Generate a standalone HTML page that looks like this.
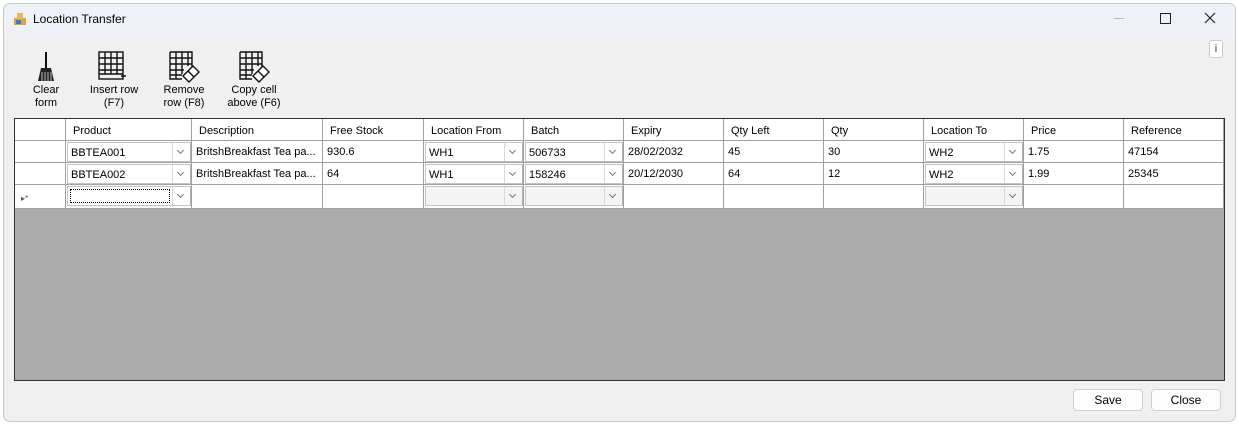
<!DOCTYPE html>
<html><head><style>
body{margin:0;width:1239px;height:424px;background:#fff;font-family:"Liberation Sans",sans-serif;font-size:11px;color:#000;position:relative;overflow:hidden}
.win{position:absolute;left:3px;top:3px;width:1231px;height:417px;border:1px solid #c8c8c8;border-radius:7px;background:#f0f0f0;overflow:hidden}
.tb{position:absolute;left:0;top:0;right:0;height:30px;background:#eef2f8}
.a{position:absolute}
.lbl{position:absolute;text-align:center;font-size:11px;line-height:13px}
.grid{position:absolute;left:14px;top:118px;width:1209px;height:261px;border:1px solid #333;background:#ababab}
.c{position:absolute;box-sizing:border-box;border-right:1px solid #a0a0a0;border-bottom:1px solid #a0a0a0;background:#fff;padding:5px 0 0 4px;white-space:nowrap;overflow:hidden;height:22px}
.cb{position:absolute;box-sizing:border-box;border:1px solid #c4c4c4;border-right-color:#b0b0b0;background:#fff;height:20px}
.ar{position:absolute;right:0;top:0;width:17px;height:18px;border-left:1px solid #d8d8d8;background:#fff}
.ar:after{content:"";position:absolute;left:5px;top:5px;width:4px;height:4px;border-right:1px solid #777;border-bottom:1px solid #777;transform:rotate(45deg)}
.btn{position:absolute;box-sizing:border-box;border:1px solid #cfcfcf;border-radius:4px;background:#fdfdfd;text-align:center;font-size:12px;line-height:20px}
</style></head><body>
<div class="win">
<div class="tb"></div>
<svg class="a" style="left:9px;top:8px" width="14" height="14"><rect x="1" y="6" width="12" height="7" fill="#d9a441"/><rect x="4" y="1" width="6" height="6" fill="#e8b860"/><rect x="3" y="8" width="5" height="4" fill="#3a78c8"/></svg>
<div class="a" style="left:29px;top:8px;font-size:12px">Location Transfer</div>
<div class="a" style="left:1110px;top:14px;width:10px;height:1px;background:#bbb"></div>
<div class="a" style="left:1156px;top:9px;width:9px;height:9px;border:1px solid #222"></div>
<svg class="a" style="left:1200px;top:8px" width="12" height="12"><path d="M1 1L11 11M11 1L1 11" stroke="#222" stroke-width="1.2"/></svg>
<div class="a" style="left:1205px;top:36px;width:12px;height:16px;border:1px solid #ccc;border-radius:3px;background:#fff;color:#1a3a9a;text-align:center;line-height:16px;font-size:11px">i</div>

<svg class="a" style="left:30px;top:46px" width="24" height="34"><rect x="11" y="2" width="2" height="16" fill="#111"/><path d="M7 18h10l3 13H4z" fill="#222"/><path d="M8 22v9M11 22v9M14 22v9M17 22v9" stroke="#fff" stroke-width=".7"/></svg>
<div class="lbl" style="left:19px;top:80px;width:46px">Clear<br>form</div>
<svg class="a" style="left:93px;top:46px" width="30" height="34"><g stroke="#111" stroke-width="1.4" fill="none"><rect x="2" y="2" width="24" height="27"/><path d="M8 2v22M14 2v22M20 2v22M2 8h24M2 14h24M2 20h24M2 24h24"/></g><path d="M24 26h5" stroke="#111" stroke-width="1.5"/></svg>
<div class="lbl" style="left:80px;top:80px;width:60px">Insert row<br>(F7)</div>
<svg class="a" style="left:164px;top:46px" width="34" height="34"><g stroke="#111" stroke-width="1.4" fill="none"><path d="M2 2h22v16M2 2v27h12M8 2v27M14 2v22M20 2v14M2 8h22M2 14h22M2 20h14M2 25h12"/><path d="M15 26l10-10 6 6-10 10z" fill="#fff"/><path d="M20 21l6 6"/></g></svg>
<div class="lbl" style="left:150px;top:80px;width:60px">Remove<br>row (F8)</div>
<svg class="a" style="left:234px;top:46px" width="34" height="34"><g stroke="#111" stroke-width="1.4" fill="none"><path d="M2 2h22v16M2 2v27h12M8 2v27M14 2v22M20 2v14M2 8h22M2 14h22M2 20h14M2 25h12"/><path d="M15 26l10-10 6 6-10 10z" fill="#fff"/><path d="M20 21l6 6"/></g></svg>
<div class="lbl" style="left:216px;top:80px;width:68px">Copy cell<br>above (F6)</div>

<div class="btn" style="left:1069px;top:385px;width:70px;height:22px">Save</div>
<div class="btn" style="left:1147px;top:385px;width:70px;height:22px">Close</div>
</div>

<div class="grid" id="g"></div>
<script>
var xs=[0,51,177,308,409,509,609,709,809,909,1009,1109,1209];
var hd=["","Product","Description","Free Stock","Location From","Batch","Expiry","Qty Left","Qty","Location To","Price","Reference"];
var rows=[["","BBTEA001","BritshBreakfast  Tea pa...","930.6","WH1","506733","28/02/2032","45","30","WH2","1.75","47154"],
["","BBTEA002","BritshBreakfast  Tea pa...","64","WH1","158246","20/12/2030","64","12","WH2","1.99","25345"],
["","","","","","","","","","","",""]];
var combo=[1,4,5,9];
var g=document.getElementById('g'),h='';
var ys=[0,22,44,66],hs=[22,22,22,24];
for(var r=0;r<4;r++){for(var i=0;i<12;i++){
 var d=r==0?hd:rows[r-1];var t=d[i];
 var st='left:'+xs[i]+'px;top:'+ys[r]+'px;width:'+(xs[i+1]-xs[i])+'px;height:'+hs[r]+'px;';
 if(r>0&&combo.indexOf(i)>=0){
  h+='<div class="c" style="'+st+'padding:0"></div>';
  var cs='left:'+(xs[i]+1)+'px;top:'+(ys[r]+1)+'px;width:'+(xs[i+1]-xs[i]-2)+'px;'+(r==3&&i!=1?'background:#f4f4f4;':'');
  h+='<div class="cb" style="'+cs+'"><span style="position:absolute;left:3px;top:4px">'+t+'</span><div class="ar"'+(r==3&&i!=1?' style="background:#f4f4f4"':'')+'></div></div>';
  if(r==3&&i==1)h+='<div class="a" style="left:'+(xs[i]+4)+'px;top:'+(ys[r]+4)+'px;width:98px;height:12px;border:1px dotted #000"></div>';
 } else {
  h+='<div class="c" style="'+st+(r==0?'padding-top:6px;padding-left:'+(i==0?4:7)+'px;':'')+'">'+t+'</div>';
 }
}}
h+='<div class="a" style="left:6px;top:75px;font-size:8px;color:#555">&#9656;*</div>';
g.innerHTML=h;
</script>
</body></html>
